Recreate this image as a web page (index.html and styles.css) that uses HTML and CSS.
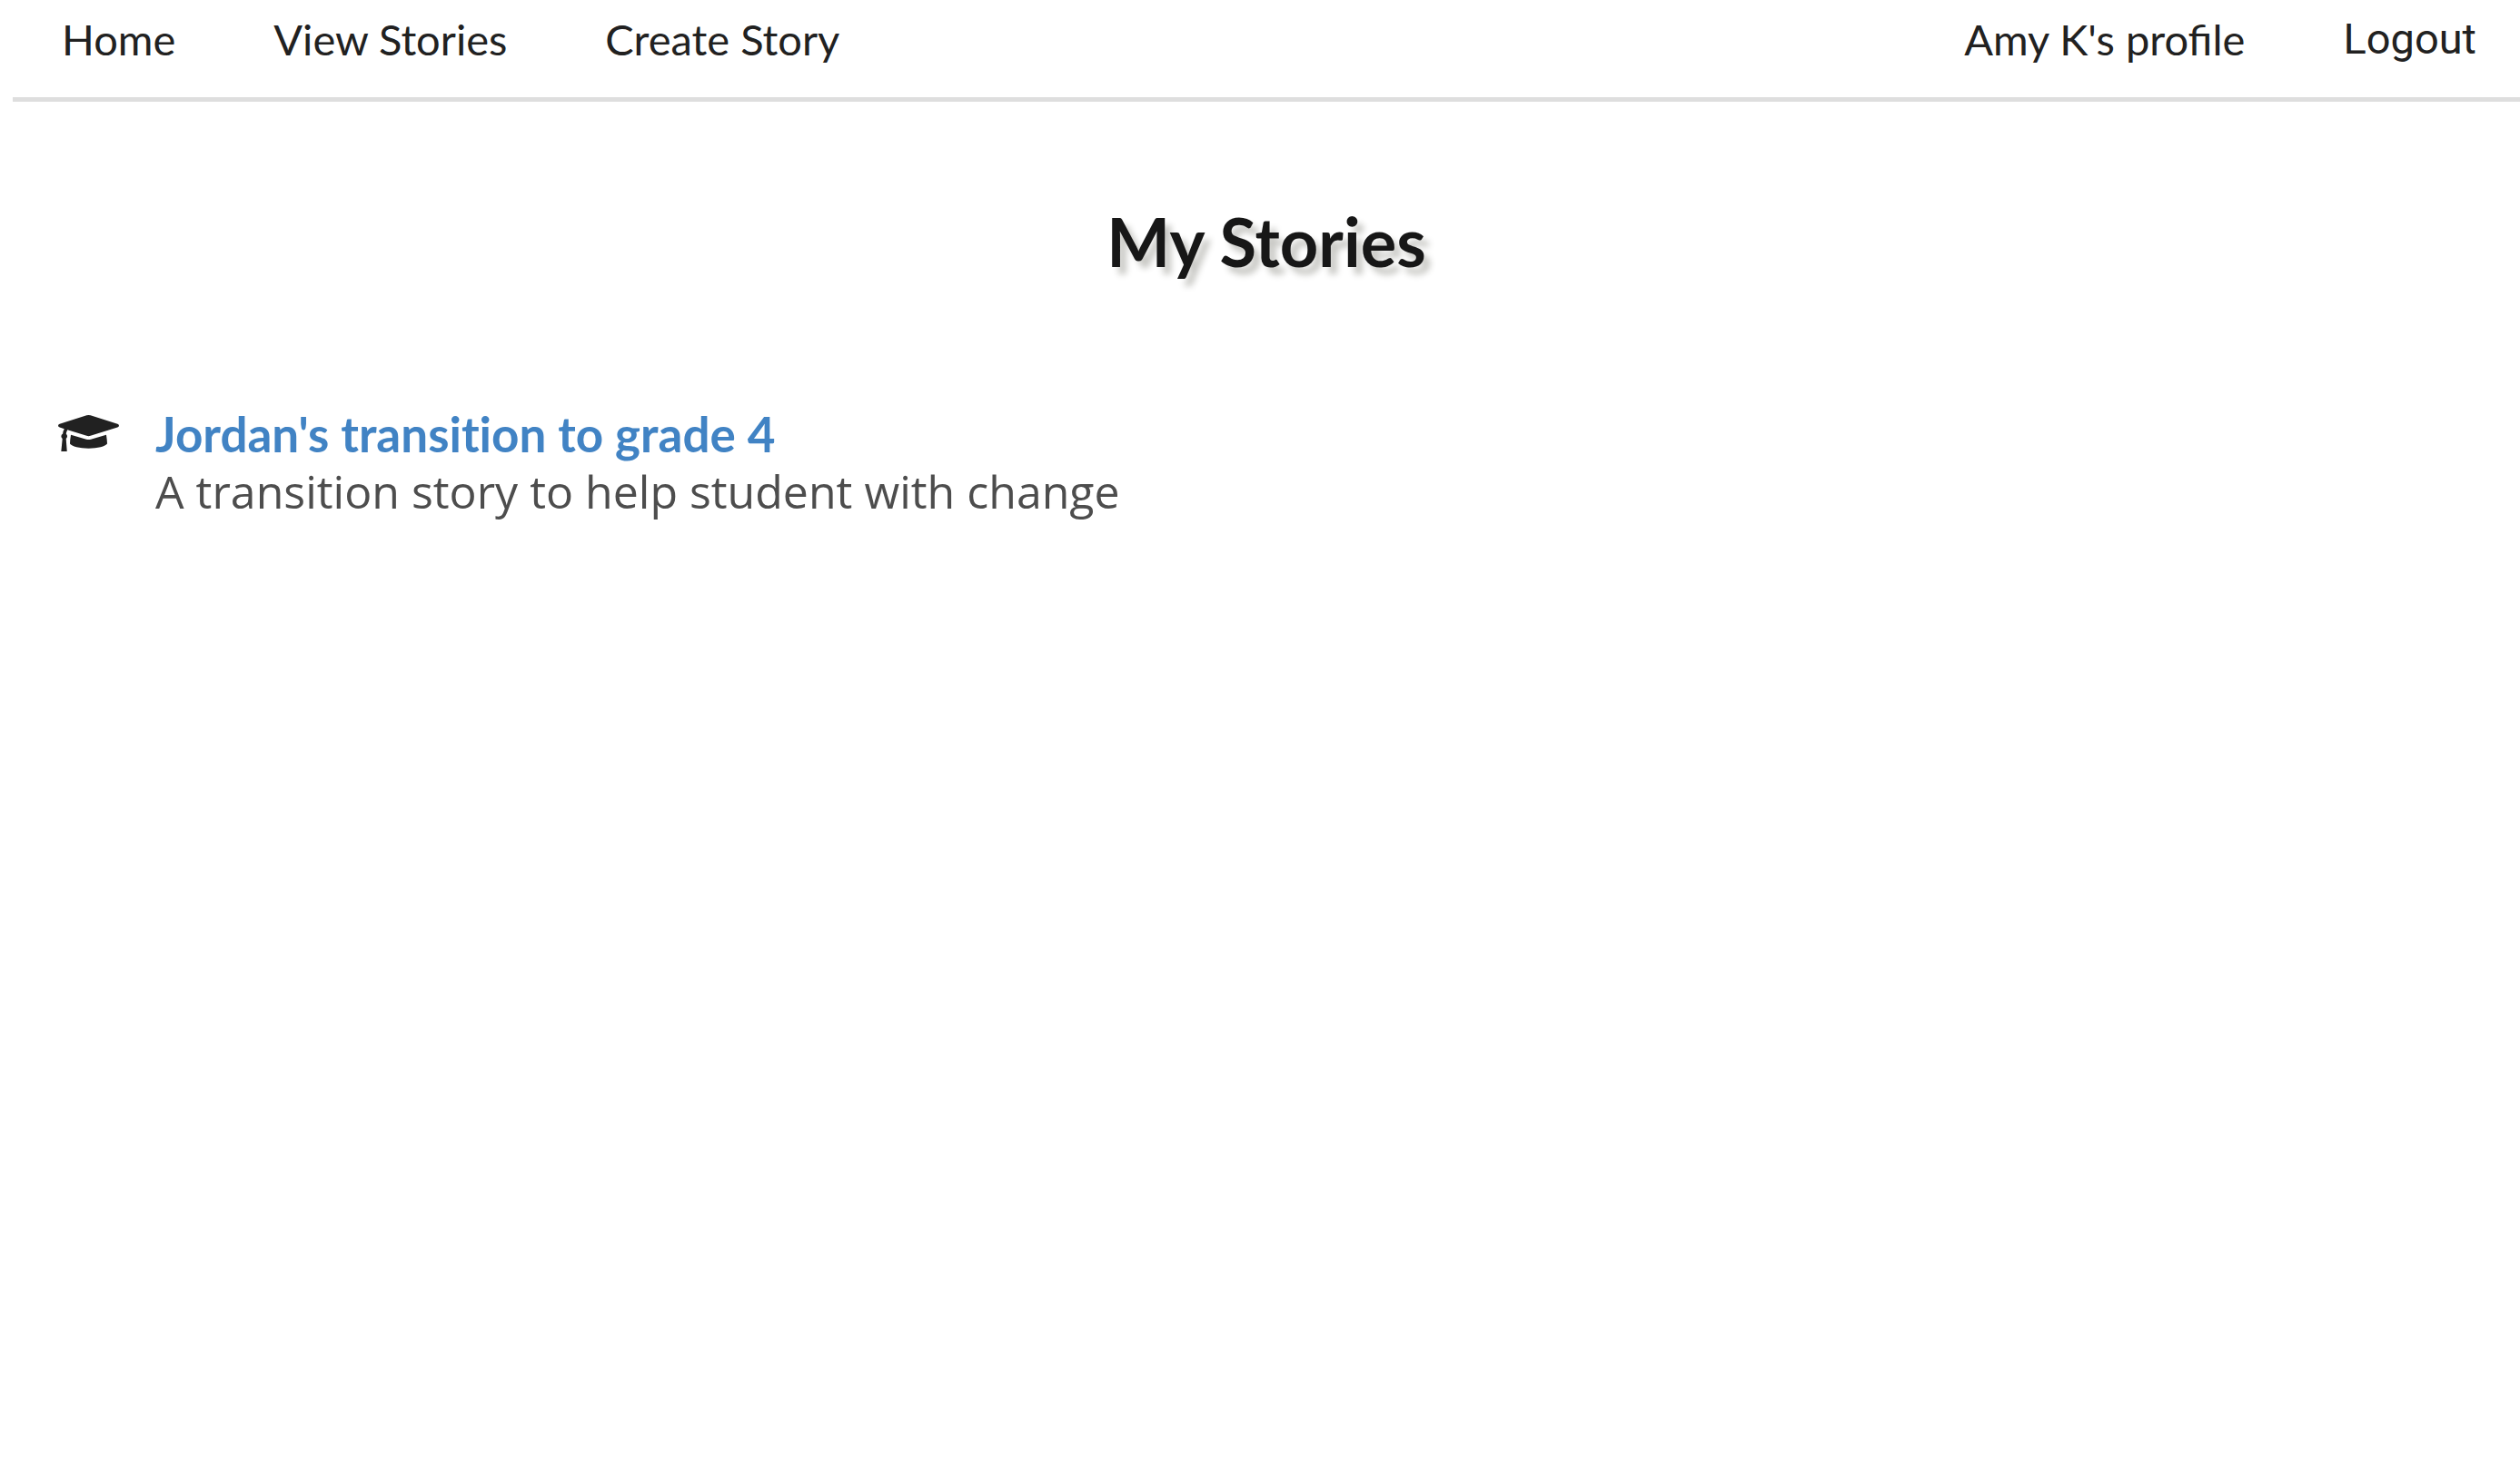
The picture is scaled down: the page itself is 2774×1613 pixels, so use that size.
FILE: index.html
```html
<!DOCTYPE html>
<html lang="en">
<head>
<meta charset="utf-8">
<title>My Stories</title>
<link rel="stylesheet" href="styles.css">
</head>
<body>
<nav class="menu">
  <a class="item" href="#">Home</a>
  <a class="item" href="#">View Stories</a>
  <a class="item" href="#">Create Story</a>
  <a class="item item-right" href="#">Amy K's profile</a>
  <button class="item logout" type="button">Logout</button>
</nav>
<main class="content">
  <h1 class="title">My Stories</h1>
  <ul class="stories">
    <li class="story">
      <svg class="icon" viewBox="0 0 640 512" aria-hidden="true"><path fill="currentColor" d="M340 67L624 158q16 6 16 18t-16 18L340 283q-20 6-40 0L98 220q-12 22-14 44 12 10 12 24 0 16-13 26L93 448H32L45 314Q32 304 32 288q0-18 17-28 3-30 16-50L16 194Q0 188 0 176t16-18L300 67q20-6 40 0zM134 273L296 320q24 7 48 0L506 273q8 50 10 94c-18 30-102 48-196 48s-178-18-196-48q2-50 10-94z"/></svg>
      <div class="story-text">
        <a class="story-title" href="#">Jordan's transition to grade 4</a>
        <p class="story-desc">A transition story to help student with change</p>
      </div>
    </li>
  </ul>
</main>
</body>
</html>
```

FILE: styles.css
```css
* { box-sizing: border-box; }
body {
  margin: 0 0 0 14px;
  background: #fff;
  color: #212121;
  font-family: Lato, sans-serif;
}
.menu {
  display: flex;
  align-items: flex-start;
  padding: 11px 0 32px;
  border-bottom: 5px solid #dedede;
}
.item {
  padding: 0 54px;
  border: 0;
  background: none;
  color: inherit;
  font-size: 47px;
  line-height: 64px;
  text-decoration: none;
  white-space: nowrap;
}
.item-right { margin-left: auto; }
.logout { padding-right: 48px; font-family: Roboto, sans-serif; }
.title {
  margin: 110px 0 0;
  color: #171717;
  font-size: 74px;
  font-weight: 700;
  line-height: 88px;
  text-align: center;
  text-shadow: 7px 8px 7px #c8c8c4;
}
.stories {
  margin: 136px 0 0;
  padding: 0 50px;
  list-style: none;
}
.story { display: flex; gap: 40px; }
.icon { width: 67px; height: 54px; margin-top: 4px; flex: none; }
.story-title {
  color: #4183c4;
  font-size: 53px;
  font-weight: 700;
  line-height: 64px;
  font-variant-ligatures: none;
  text-decoration: none;
}
.story-desc {
  margin: 0;
  color: #4d4d4d;
  font: 50px/62px "Open Sans", sans-serif;
}
```
